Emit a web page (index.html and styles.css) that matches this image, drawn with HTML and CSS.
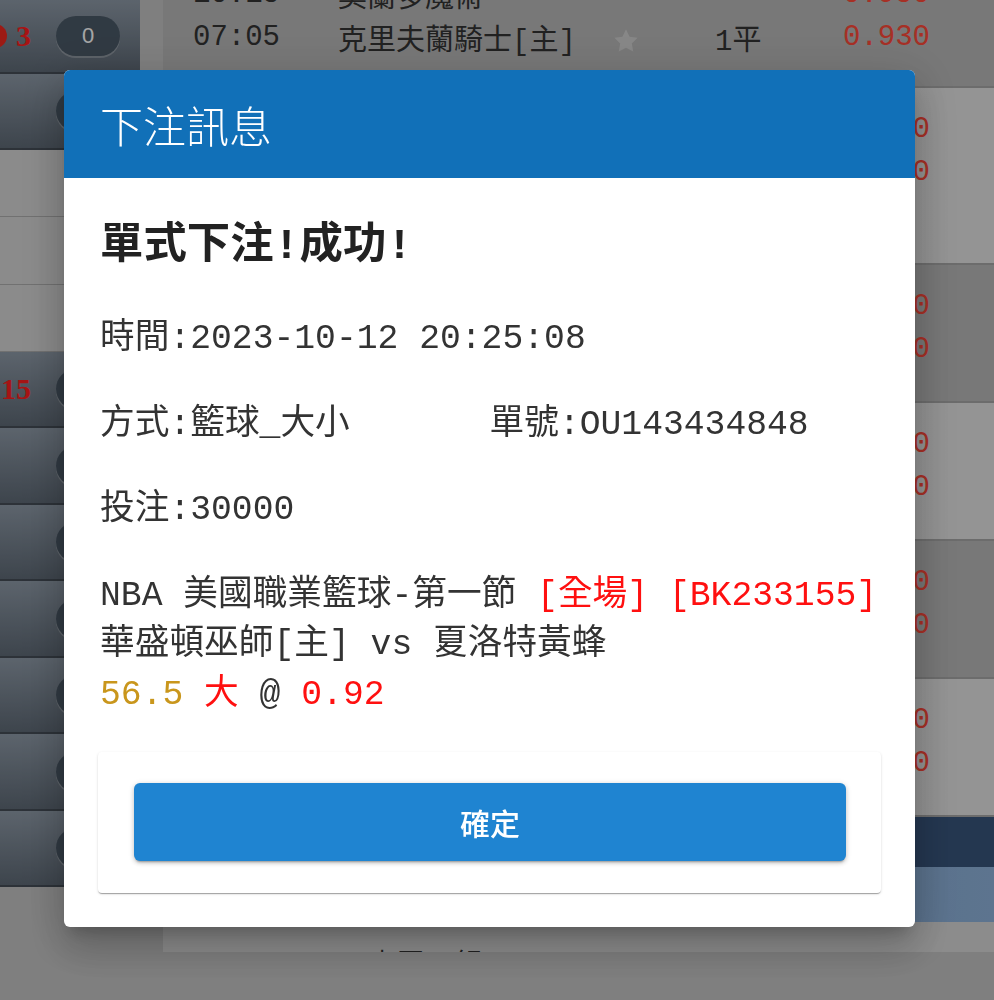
FILE: index.html
```html
<!DOCTYPE html>
<html lang="zh-Hant">
<head>
    <meta charset="UTF-8">
    <meta name="viewport" content="width=device-width, initial-scale=1.0">
    <title>下注訊息</title>
    <link rel="stylesheet" href="styles.css">
</head>
<body>
    <div class="page">
        <aside class="side">
            <div class="side-item dark first"><span class="dot"></span><span class="num">3</span><span class="pill">0</span></div>
            <div class="side-item dark second"><span class="pill">0</span></div>
            <div class="side-item light"></div>
            <div class="side-item light"></div>
            <div class="side-item light"></div>
            <div class="side-item dark"><span class="num">15</span><span class="pill">0</span></div>
            <div class="side-item dark"><span class="pill">0</span></div>
            <div class="side-item dark"><span class="pill">0</span></div>
            <div class="side-item dark"><span class="pill">0</span></div>
            <div class="side-item dark"><span class="pill">0</span></div>
            <div class="side-item dark"><span class="pill">0</span></div>
            <div class="side-item dark"><span class="pill">0</span></div>
        </aside>

        <div class="gutter"></div>

        <main class="board">
            <section class="game shade first">
                <div class="line"><span>10:15</span><span>奧蘭多魔術</span><span></span><span></span><span class="odds">0.950</span></div>
                <div class="line">
                    <span>07:05</span><span>克里夫蘭騎士[主]</span>
                    <svg class="star" viewBox="0 0 24 24"><path d="M12 2l3.09 6.26L22 9.27l-5 4.87 1.18 6.88L12 17.77l-6.18 3.25L7 14.14 2 9.27l6.91-1.01z"/></svg>
                    <span>1平</span><span class="odds">0.930</span>
                </div>
            </section>
            <section class="game plain tall">
                <div class="line"><span>08:00</span><span>密爾瓦基公鹿</span><span></span><span></span><span class="odds">0.930</span></div>
                <div class="line"><span>08:00</span><span>底特律活塞[主]</span><span></span><span>2</span><span class="odds">0.930</span></div>
            </section>
            <section class="game shade">
                <div class="line"><span>08:30</span><span>亞特蘭大老鷹</span><span></span><span></span><span class="odds">0.930</span></div>
                <div class="line"><span>08:30</span><span>紐約尼克[主]</span><span></span><span>3</span><span class="odds">0.930</span></div>
            </section>
            <section class="game plain">
                <div class="line"><span>09:00</span><span>邁阿密熱火</span><span></span><span></span><span class="odds">0.930</span></div>
                <div class="line"><span>09:00</span><span>休士頓火箭[主]</span><span></span><span>1平</span><span class="odds">0.930</span></div>
            </section>
            <section class="game shade">
                <div class="line"><span>10:00</span><span>丹佛金塊</span><span></span><span></span><span class="odds">0.930</span></div>
                <div class="line"><span>10:00</span><span>鳳凰城太陽[主]</span><span></span><span>4</span><span class="odds">0.930</span></div>
            </section>
            <section class="game plain">
                <div class="line"><span>10:30</span><span>波特蘭拓荒者</span><span></span><span></span><span class="odds">0.930</span></div>
                <div class="line"><span>10:30</span><span>沙加緬度國王[主]</span><span></span><span>2</span><span class="odds">0.930</span></div>
            </section>
            <div class="league"></div>
            <div class="league-sub"></div>
            <div class="more">西班牙甲組</div>
        </main>
    </div>

    <div class="backdrop">
        <div class="dialog">
            <div class="dialog-head">下注訊息</div>
            <div class="dialog-body">
                <h3 class="result">單式下注!成功!</h3>
                <p>時間:2023-10-12 20:25:08</p>
                <p class="split"><span>方式:籃球_大小</span><span>單號:OU143434848</span></p>
                <p>投注:30000</p>
                <p>NBA 美國職業籃球-第一節 <span class="red">[全場]</span> <span class="red">[BK233155]</span><br>華盛頓巫師[主] vs 夏洛特黃蜂<br><span class="gold">56.5</span> <span class="red">大</span> @ <span class="red">0.92</span></p>
                <div class="actions">
                    <button class="ok">確定</button>
                </div>
            </div>
        </div>
    </div>
</body>
</html>
```

FILE: styles.css
```css
/* Base */
html,
body {
    margin: 0;
    padding: 0;
}

body {
    width: 994px;
    height: 1000px;
    overflow: hidden;
    background: #c4c4c4;
    font-family: "Noto Sans CJK TC", "Noto Sans", sans-serif;
    color: #333;
}

.page {
    display: flex;
    align-items: flex-start;
}

/* Sidebar */
.side {
    width: 140px;
    flex: none;
}

.side-item {
    display: flex;
    align-items: center;
    justify-content: flex-end;
    gap: 25px;
    padding-right: 20px;
    box-sizing: border-box;
    overflow: hidden;
}

.side-item.dark {
    height: 76.5px;
    background: linear-gradient(#8e9aa7, #5f6a76);
    border-bottom: 2px solid #454d57;
}

.side-item.first {
    height: 74px;
}

.side-item.second {
    height: 76px;
}

.side-item.light {
    height: 67.33px;
    background: #d6d6d6;
    border-bottom: 1px solid #aeaeae;
}

.dot {
    width: 24px;
    height: 24px;
    border-radius: 50%;
    background: #f02820;
    margin-right: -16px;
    flex: none;
}

.num {
    font-family: "Liberation Serif", serif;
    font-weight: bold;
    font-size: 30px;
    color: #ff2020;
}

.pill {
    width: 64px;
    height: 40px;
    flex: none;
    display: flex;
    align-items: center;
    justify-content: center;
    border-radius: 20px;
    background: #4b5967;
    color: #fff;
    font-family: "Liberation Sans", sans-serif;
    font-size: 22px;
    box-shadow: 0 2px 0 rgba(255, 255, 255, 0.25);
}

.gutter {
    width: 23px;
    flex: none;
}

/* Match board */
.board {
    flex: 1;
    height: 952px;
    overflow: hidden;
    background: #d8d8d8;
    font-family: "Liberation Mono", "Noto Sans CJK TC", monospace;
    font-size: 29px;
    color: #333;
}

.game {
    padding: 20px 64px 30px 30px;
    border-bottom: 2px solid #a6a6a6;
}

.game.first {
    margin-top: -47px;
    padding-bottom: 27px;
}

.game.tall {
    padding-bottom: 69px;
}

.game.shade {
    background: #b8b8b8;
}

.game.plain {
    background: linear-gradient(90deg, #d4d4d4, #e4e4e4);
}

.line {
    display: grid;
    grid-template-columns: 145px 274px 103px 1fr auto;
    align-items: center;
    height: 43px;
    white-space: nowrap;
}

.odds {
    color: #ff4a3a;
}

.star {
    width: 28px;
    height: 28px;
    margin-top: 6px;
    fill: #cfcfcf;
}

.league {
    height: 50px;
    background: #38557c;
}

.league-sub {
    height: 55px;
    background: linear-gradient(90deg, #6f93bd, #8fb3dc);
}

.more {
    padding: 24px 0 0 175px;
    line-height: 43px;
}

/* Dialog */
.backdrop {
    position: fixed;
    inset: 0;
    padding: 70px 0 0 64px;
    background: rgba(0, 0, 0, 0.35);
}

.dialog {
    width: 851px;
    background: #fff;
    border-radius: 6px;
    overflow: hidden;
    box-shadow: 0 11px 15px -7px rgba(0, 0, 0, 0.2),
                0 24px 38px 3px rgba(0, 0, 0, 0.14),
                0 9px 46px 8px rgba(0, 0, 0, 0.12);
}

.dialog-head {
    height: 108px;
    display: flex;
    align-items: center;
    padding: 0 36px;
    background: #1170b8;
    color: #fff;
    font-size: 43px;
    font-weight: 300;
}

.dialog-body {
    padding: 38px 34px 34px;
    font-family: "Liberation Mono", "Noto Sans CJK TC", monospace;
    font-size: 34.7px;
    line-height: 49.5px;
    color: #333;
}

.result {
    margin: 0;
    padding: 0 2px;
    font-size: 43.4px;
    line-height: 62px;
    font-weight: bold;
    color: #222;
}

.dialog-body p {
    margin: 36px 0 0;
    padding: 0 2px;
}

.split {
    display: grid;
    grid-template-columns: 1fr 1fr;
}

.red {
    color: #ff1010;
}

.gold {
    color: #c9961c;
}

.actions {
    margin-top: 33px;
    padding: 31px 35px 32px 36px;
    border-radius: 4px;
    background: #fff;
    box-shadow: 0 2px 1px -1px rgba(0, 0, 0, 0.2),
                0 1px 1px 0 rgba(0, 0, 0, 0.14),
                0 1px 3px 0 rgba(0, 0, 0, 0.12);
}

.ok {
    display: block;
    width: 100%;
    height: 78px;
    border: none;
    border-radius: 6px;
    background: #1f84d1;
    color: #fff;
    font-family: "Noto Sans CJK TC", sans-serif;
    font-size: 30px;
    font-weight: 500;
    cursor: pointer;
    box-shadow: 0 3px 2px -2px rgba(0, 0, 0, 0.25),
                0 2px 4px 0 rgba(0, 0, 0, 0.16),
                0 1px 6px 0 rgba(0, 0, 0, 0.12);
}
```
